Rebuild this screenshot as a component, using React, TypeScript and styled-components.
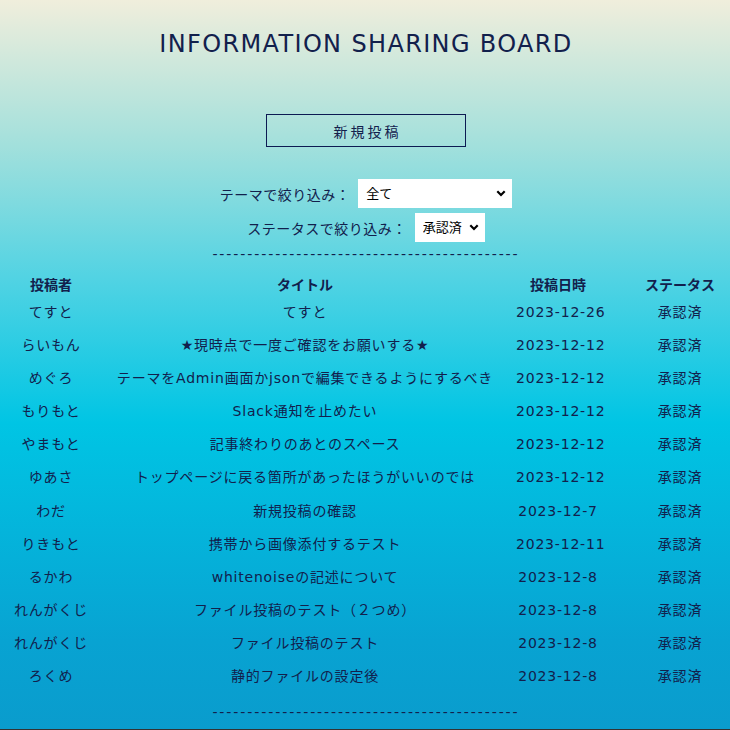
import { FC } from "react";
import styled, { createGlobalStyle } from "styled-components";

interface Post {
  author: string;
  title: string;
  date: string;
  status: string;
}

const posts: Post[] = [
  { author: "てすと", title: "てすと", date: "2023-12-26", status: "承認済" },
  { author: "らいもん", title: "★現時点で一度ご確認をお願いする★", date: "2023-12-12", status: "承認済" },
  { author: "めぐろ", title: "テーマをAdmin画面かjsonで編集できるようにするべき", date: "2023-12-12", status: "承認済" },
  { author: "もりもと", title: "Slack通知を止めたい", date: "2023-12-12", status: "承認済" },
  { author: "やまもと", title: "記事終わりのあとのスペース", date: "2023-12-12", status: "承認済" },
  { author: "ゆあさ", title: "トップページに戻る箇所があったほうがいいのでは", date: "2023-12-12", status: "承認済" },
  { author: "わだ", title: "新規投稿の確認", date: "2023-12-7", status: "承認済" },
  { author: "りきもと", title: "携帯から画像添付するテスト", date: "2023-12-11", status: "承認済" },
  { author: "るかわ", title: "whitenoiseの記述について", date: "2023-12-8", status: "承認済" },
  { author: "れんがくじ", title: "ファイル投稿のテスト（２つめ）", date: "2023-12-8", status: "承認済" },
  { author: "れんがくじ", title: "ファイル投稿のテスト", date: "2023-12-8", status: "承認済" },
  { author: "ろくめ", title: "静的ファイルの設定後", date: "2023-12-8", status: "承認済" },
];

const DASHES = "-".repeat(44);

const Chevron: FC = () => (
  <ChevronIcon width="10" height="7" viewBox="0 0 10 7">
    <path d="M1.3 1.3 L5 5 L8.7 1.3" fill="none" stroke="#000" strokeWidth="2.2" />
  </ChevronIcon>
);

const App: FC = () => {
  return (
    <>
      <GlobalStyle />
      <Main>
        <Title>INFORMATION SHARING BOARD</Title>

        <NewPostButton>新規投稿</NewPostButton>

        <Filters>
          <FilterRow>
            <FilterLabel>テーマで絞り込み：</FilterLabel>
            <SelectWrap $width={154}>
              <Select defaultValue="all">
                <option value="all">全て</option>
              </Select>
              <Chevron />
            </SelectWrap>
          </FilterRow>
          <FilterRow>
            <FilterLabel>ステータスで絞り込み：</FilterLabel>
            <SelectWrap $width={70}>
              <Select defaultValue="approved">
                <option value="approved">承認済</option>
              </Select>
              <Chevron />
            </SelectWrap>
          </FilterRow>
        </Filters>

        <Divider>{DASHES}</Divider>

        <Table>
          <colgroup>
            <col style={{ width: 86 }} />
            <col style={{ width: 422 }} />
            <col style={{ width: 84 }} />
            <col style={{ width: 122 }} />
          </colgroup>
          <thead>
            <tr>
              <Th>投稿者</Th>
              <Th>タイトル</Th>
              <Th>投稿日時</Th>
              <Th $last>ステータス</Th>
            </tr>
          </thead>
          <tbody>
            {posts.map((p, i) => (
              <tr key={i}>
                <Td>{p.author}</Td>
                <Td>{p.title}</Td>
                <Td>{p.date}</Td>
                <Td $last>{p.status}</Td>
              </tr>
            ))}
          </tbody>
        </Table>

        <BottomDivider>{DASHES}</BottomDivider>
      </Main>
      <Footer />
    </>
  );
};

const GlobalStyle = createGlobalStyle`
  body {
    margin: 0;
    font-family: "DejaVu Sans", "Noto Sans CJK JP", sans-serif;
    color: #12204c;
  }
`;

const Main = styled.main`
  height: 729px;
  box-sizing: border-box;
  padding-top: 29px;
  display: flex;
  flex-direction: column;
  align-items: center;
  background: linear-gradient(
    to bottom,
    #f0eedc 0%,
    #a2e0dc 20%,
    #52d3e3 38%,
    #00c5e4 58%,
    #08a3d2 88%,
    #0a9ccd 100%
  );
`;

const Title = styled.h1`
  margin: 0 0 0 2px;
  font-size: 24px;
  line-height: 30px;
  font-weight: normal;
  letter-spacing: 1.35px;
`;

const NewPostButton = styled.button`
  margin: 55px 0 0 2px;
  width: 200px;
  height: 33px;
  border: 1px solid #0c1a52;
  background: transparent;
  color: #12204c;
  font-family: inherit;
  font-size: 14px;
  letter-spacing: 3px;
  padding: 0 0 0 3px;
  cursor: pointer;
`;

const Filters = styled.div`
  margin: 32px 0 0 2px;
  display: flex;
  flex-direction: column;
  align-items: center;
  gap: 5px;
`;

const FilterRow = styled.div`
  display: flex;
  align-items: center;
  gap: 8px;
`;

const FilterLabel = styled.span`
  font-size: 14px;
  letter-spacing: 0.5px;
`;

const SelectWrap = styled.div<{ $width: number }>`
  position: relative;
  width: ${(p) => p.$width}px;
  height: 29px;
`;

const Select = styled.select`
  appearance: none;
  width: 100%;
  height: 100%;
  border: none;
  border-radius: 0;
  background: #fff;
  color: #000;
  font-family: inherit;
  font-size: 13px;
  padding: 0 0 0 8px;
  outline: none;
`;

const ChevronIcon = styled.svg`
  position: absolute;
  right: 6px;
  top: 11px;
  pointer-events: none;
`;

const Divider = styled.div`
  margin: 4px 0 0 2px;
  font-size: 14px;
  line-height: 17px;
  letter-spacing: 1.93px;
`;

const BottomDivider = styled(Divider)`
  margin-top: 11px;
`;

const Table = styled.table`
  margin-top: 12px;
  width: 714px;
  table-layout: fixed;
  border-collapse: collapse;
  font-size: 14px;
  letter-spacing: 0.8px;
`;

const Th = styled.th<{ $last?: boolean }>`
  padding: 2px 0 2px ${(p) => (p.$last ? "38px" : "0")};
  line-height: 17px;
  text-align: center;
  font-weight: bold;
  letter-spacing: 0;
  white-space: nowrap;
`;

const Td = styled.td<{ $last?: boolean }>`
  padding: 8px 0 8.1px ${(p) => (p.$last ? "38px" : "0")};
  line-height: 17px;
  text-align: center;
  white-space: nowrap;
`;

const Footer = styled.footer`
  height: 120px;
  background: #333;
`;

export default App;
